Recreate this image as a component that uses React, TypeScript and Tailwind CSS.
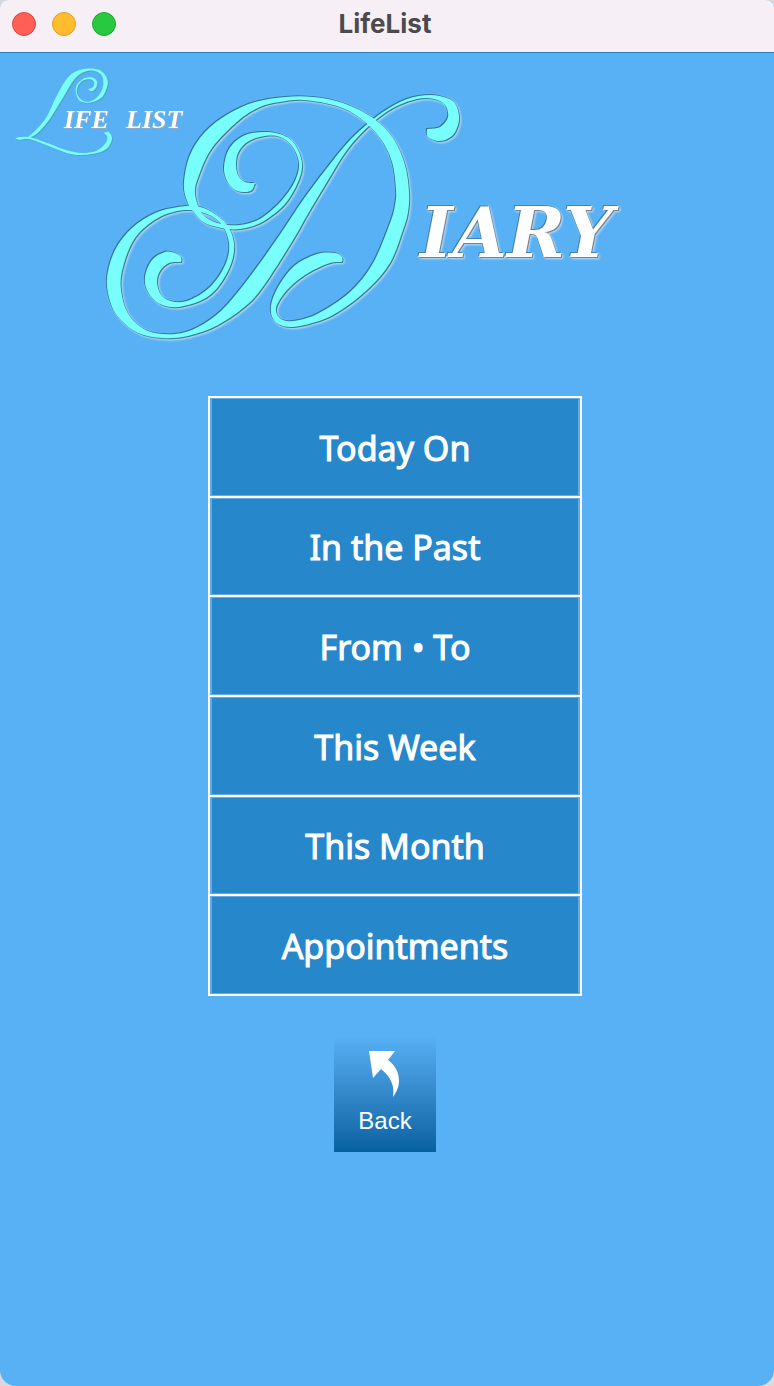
type Point = [number, number];

/** Closed Catmull-Rom outline; each inner list is one smooth run, runs meet in corners. */
function outline(runs: Point[][]): string {
  let d = "";
  runs.forEach((p, r) => {
    d += `${r === 0 ? "M" : "L"}${p[0][0]} ${p[0][1]}`;
    for (let i = 0; i < p.length - 1; i++) {
      const a = p[Math.max(i - 1, 0)];
      const b = p[i];
      const c = p[i + 1];
      const e = p[Math.min(i + 2, p.length - 1)];
      d += `C${b[0] + (c[0] - a[0]) / 6} ${b[1] + (c[1] - a[1]) / 6} ${c[0] - (e[0] - b[0]) / 6} ${c[1] - (e[1] - b[1]) / 6} ${c[0]} ${c[1]}`;
    }
  });
  return d + "Z";
}

const bowl = outline([
  [[255, 183], [252, 190], [245, 192], [235, 190], [227, 181], [224, 167], [229, 149], [243, 136], [262, 132], [280, 134], [294, 143], [302, 163], [298, 182], [285, 204], [264, 221], [246, 228], [228, 229], [205, 223], [192, 210], [186, 198], [184, 182], [190, 155], [205, 132], [228, 114], [255, 102], [285, 97], [313, 97], [343, 103], [373, 118], [393, 138], [405, 165], [409, 192], [408, 212], [403, 230], [390, 263], [367, 290], [333, 315], [300, 326], [280, 325], [271, 313], [275, 293], [293, 267], [317, 254], [335, 253], [342, 257], [342, 262]],
  [[342, 262], [330, 263], [310, 272], [291, 286], [279, 301], [276, 311], [281, 319], [293, 321], [317, 314], [350, 292], [373, 263], [390, 223], [395, 205], [396, 190], [392, 162], [380, 138], [360, 118], [337, 106], [303, 100], [280, 102], [260, 107], [238, 121], [212, 148], [199, 175], [195, 193], [201, 212], [212, 221], [228, 225], [246, 224], [263, 217], [282, 200], [295, 181], [299, 163], [292, 146], [280, 137], [265, 136], [249, 141], [239, 151], [236, 163], [238, 175], [245, 182], [255, 183]],
]);

const stem = outline([
  [[427, 129], [428, 137], [440, 141], [453, 135], [459, 120], [456, 105], [447, 98], [430, 95], [407, 99], [386, 110], [370, 122], [350, 140], [327, 168], [303, 200], [285, 227], [265, 256], [245, 283], [222, 310], [198, 327], [175, 334], [148, 331], [129, 315], [121, 290], [123, 267], [135, 238], [158, 218], [185, 210], [207, 214], [222, 225], [229, 243], [226, 263], [212, 285], [192, 299], [175, 302], [162, 296], [157, 283], [160, 271], [169, 263], [181, 262]],
  [[181, 262], [181, 257], [175, 253], [165, 252], [152, 260], [145, 277], [148, 292], [160, 304], [178, 307], [202, 300], [218, 287], [231, 264], [234, 243], [227, 225], [212, 212], [195, 206], [178, 207], [155, 213], [132, 228], [115, 250], [107, 278], [110, 301], [119, 318], [138, 333], [162, 338], [188, 336], [218, 325], [248, 304], [267, 281], [293, 240], [309, 212], [327, 182], [347, 150], [370, 125], [393, 108], [417, 99], [434, 99], [445, 105], [448, 117], [440, 127], [427, 129]],
]);

/* Drawn on a grid three times finer than the wordmark's. */
const smallStem = outline([
  [[264, 268], [278, 262], [283, 248], [272, 238], [250, 241], [234, 258], [231, 280], [245, 300], [268, 305], [292, 291], [307, 266], [310, 242], [302, 222], [280, 212], [250, 217], [220, 242], [186, 298], [150, 356], [114, 398], [88, 414]],
  [[84, 410], [108, 390], [140, 350], [168, 292], [196, 242], [224, 216], [260, 206], [300, 211], [322, 237], [320, 265], [303, 295], [268, 308], [240, 303], [228, 280], [230, 255], [250, 236], [275, 232], [291, 244], [289, 262], [276, 274], [264, 268]],
]);

const smallFoot = outline([
  [[46, 416], [60, 411], [90, 412], [150, 432], [200, 451], [245, 459], [290, 452], [316, 430], [322, 410], [311, 399]],
  [[311, 399], [325, 396], [336, 412], [328, 437], [300, 457], [245, 465], [200, 459], [140, 436], [90, 418], [60, 419], [46, 416]],
]);

function Wordmark() {
  return (
    <svg
      viewBox="0 53 640 300"
      className="block h-auto w-[640px] max-w-full"
      role="img"
      aria-label="Life List Diary"
    >
      <g
        fill="#79fffb"
        className="[filter:drop-shadow(-1px_-1px_0px_#2f74a8)_drop-shadow(1px_1px_0px_#347f90)_drop-shadow(1px_1px_1px_#c4dcf0)]"
      >
        <path d={bowl} />
        <path d={stem} />
      </g>
      <g
        fill="#79fffb"
        className="[filter:drop-shadow(1px_1px_0px_#4fa6bd)]"
      >
        <path transform="scale(0.3333)" d={smallStem} />
        <path transform="scale(0.3333)" d={smallFoot} />
      </g>
      <g fill="#ffffff" className="font-bold italic">
        <g className="font-['Liberation_Serif',serif] text-[26px] [filter:drop-shadow(1px_1px_0px_#8dabc8)]">
          <text x="64" y="128">IFE</text>
          <text x="126" y="128">LIST</text>
        </g>
        <text
          x="420"
          y="257"
          className="font-['DejaVu_Serif',serif] text-[70px] [filter:drop-shadow(-1px_-1px_0px_#3f7fb8)_drop-shadow(1px_1px_0px_#75818f)_drop-shadow(1px_1px_1px_#c4dcf0)]"
        >
          IARY
        </text>
      </g>
    </svg>
  );
}

const entries = [
  "Today On",
  "In the Past",
  "From • To",
  "This Week",
  "This Month",
  "Appointments",
];

export default function App() {
  return (
    <div className="min-h-screen bg-[#d9d9dc]">
      <div className="flex min-h-screen flex-col overflow-hidden rounded-t-lg rounded-b-2xl bg-[#57b1f4]">
        <header className="grid h-[53px] grid-cols-[1fr_auto_1fr] items-center border-b border-[#2b82bd] bg-[#f6eff6] px-3 pb-1">
          <div className="flex gap-4">
            <button aria-label="Close" className="size-6 rounded-full border border-[#e0473f] bg-[#ff5f57]" />
            <button aria-label="Minimize" className="size-6 rounded-full border border-[#dfa023] bg-[#febc2e]" />
            <button aria-label="Zoom" className="size-6 rounded-full border border-[#1dad2b] bg-[#28c840]" />
          </div>
          <h1 className="pr-1 font-['Inter',sans-serif] text-[26px] leading-8 font-bold text-[#4d4a4f]">
            LifeList
          </h1>
        </header>
        <main className="flex flex-col items-center">
          <div className="w-full">
            <Wordmark />
          </div>
          <div className="mt-[43px] w-full pl-4">
            <nav className="mx-auto grid h-[600px] w-[374px] max-w-full grid-rows-6 gap-0.5 border-2 border-white bg-white">
              {entries.map((label) => (
                <button
                  key={label}
                  className="border border-x-2 border-[#62abe4] bg-[#2687cb] pt-0.5 font-['Noto_Sans',sans-serif] text-[34px] leading-10 text-white [-webkit-text-stroke:1px_white]"
                >
                  {label}
                </button>
              ))}
            </nav>
          </div>
          <div className="mt-10 flex w-full justify-center pr-1">
            <button className="flex h-[116px] w-[102px] flex-col items-center gap-2 bg-linear-to-b from-[#57b1f4] to-[#0561a2] pt-[15px] font-['Liberation_Sans',sans-serif] text-[24px] leading-8 text-white">
              <svg viewBox="0 0 32 46" className="h-[46px] w-8" fill="currentColor" aria-hidden="true">
                <path d="M0 0H26L19 9C27 15 30 22 30 30C30 36 27 42 24 46C26 34 21 25 12 18L4 27Z" />
              </svg>
              Back
            </button>
          </div>
        </main>
      </div>
    </div>
  );
}
